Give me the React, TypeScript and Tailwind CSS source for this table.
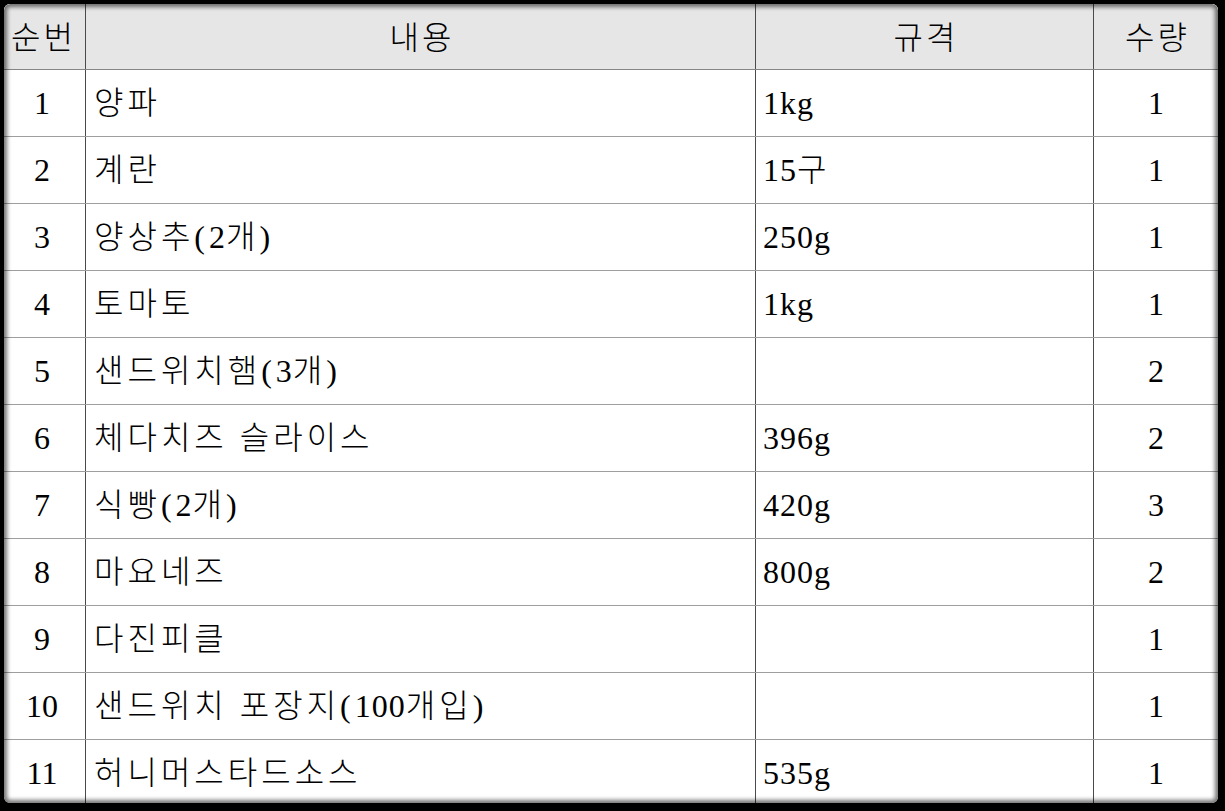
import React from "react";

const rows: [string, string, string, string][] = [
  ["1", "양파", "1kg", "1"],
  ["2", "계란", "15구", "1"],
  ["3", "양상추(2개)", "250g", "1"],
  ["4", "토마토", "1kg", "1"],
  ["5", "샌드위치햄(3개)", "", "2"],
  ["6", "체다치즈 슬라이스", "396g", "2"],
  ["7", "식빵(2개)", "420g", "3"],
  ["8", "마요네즈", "800g", "2"],
  ["9", "다진피클", "", "1"],
  ["10", "샌드위치 포장지(100개입)", "", "1"],
  ["11", "허니머스타드소스", "535g", "1"],
];

const font = {
  fontFamily: '"Liberation Serif", "Noto Sans CJK KR", serif',
};

function Content({ text }: { text: string }) {
  const parts = text.split(/(\d+)/);
  return (
    <>
      {parts.map((p, i) =>
        /^\d+$/.test(p) ? (
          <span key={i} className="tracking-[1px]">
            {p}
          </span>
        ) : (
          <span key={i}>{p}</span>
        )
      )}
    </>
  );
}

export default function App() {
  return (
    <div className="w-[1225px] h-[811px] bg-black pt-[4px] pl-[4px] pr-[7px] pb-[8px]">
      <div
        className="relative w-full h-full overflow-hidden rounded-[6px] bg-white text-black text-[32px] leading-none font-light"
        style={font}
      >
        <div className="flex h-[66px] bg-[#e6e6e6] border-b border-[#858585] tracking-[3px]">
          <div className="w-[82px] flex items-center justify-center pr-[2px] pt-[2px] border-r border-[#4a4a4a]">순번</div>
          <div className="w-[670px] flex items-center justify-center pl-[3px] pt-[2px] border-r border-[#4a4a4a]">내용</div>
          <div className="w-[338px] flex items-center justify-center pl-[3px] pt-[2px] border-r border-[#4a4a4a]">규격</div>
          <div className="flex-1 flex items-center justify-center pl-[3px] pt-[2px]">수량</div>
        </div>
        {rows.map((r, i) => (
          <div key={i} className="flex h-[67px] border-b border-[#9e9e9e]">
            <div className="w-[82px] flex items-center justify-center pr-[5px] border-r border-[#4a4a4a]">{r[0]}</div>
            <div className="w-[670px] flex items-center pl-[8px] border-r border-[#4a4a4a] whitespace-pre tracking-[4px]">
              <Content text={r[1]} />
            </div>
            <div className="w-[338px] flex items-center pl-[7px] border-r border-[#4a4a4a] tracking-[1px]">{r[2]}</div>
            <div className="flex-1 flex items-center justify-center">{r[3]}</div>
          </div>
        ))}
        <div className="pointer-events-none absolute inset-0 rounded-[6px] shadow-[inset_0_0_4px_3px_rgba(0,0,0,0.55)]" />
      </div>
    </div>
  );
}
